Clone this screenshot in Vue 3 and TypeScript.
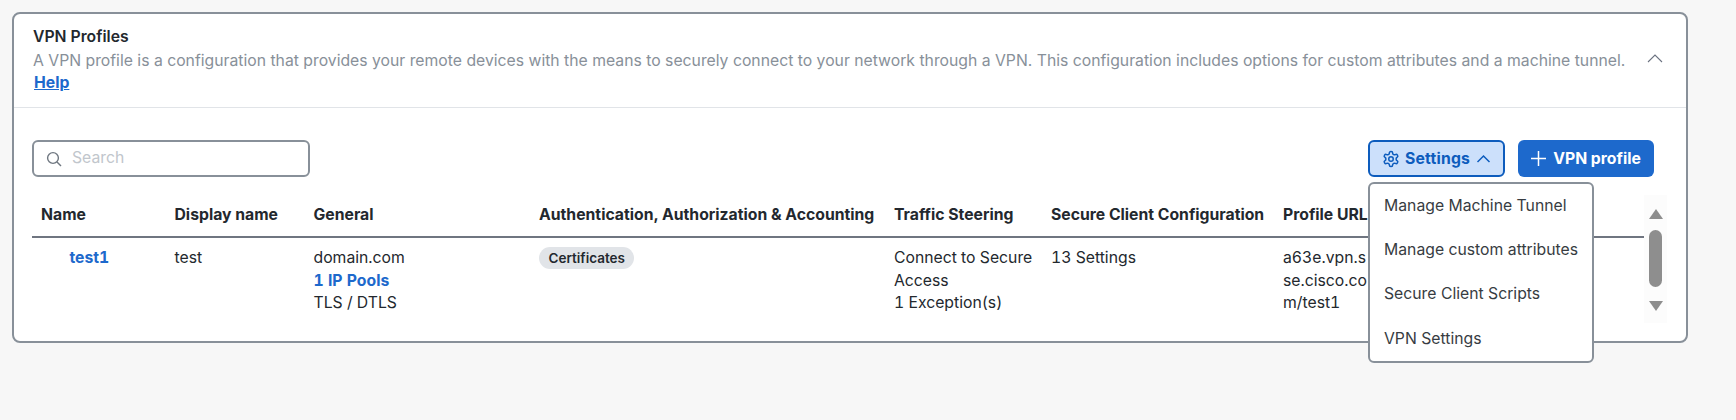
<template>
  <div class="page">
    <section class="card">
      <header class="card-head">
        <div class="head-text">
          <h2 class="title">VPN Profiles</h2>
          <p class="desc">A VPN profile is a configuration that provides your remote devices with the means to securely connect to your network through a VPN. This configuration includes options for custom attributes and a machine tunnel.</p>
          <a class="help" href="#">Help</a>
        </div>
        <svg class="collapse" width="18" height="10" viewBox="0 0 18 10" fill="none">
          <path d="M2 9l7-7 7 7" stroke="#6b7280" stroke-width="1.1" />
        </svg>
      </header>

      <div class="toolbar">
        <label class="search">
          <svg width="16" height="16" viewBox="0 0 16 16" fill="none">
            <circle cx="7" cy="7" r="5.4" stroke="#6f7780" stroke-width="1.4" />
            <path d="M11 11l4 4" stroke="#6f7780" stroke-width="1.4" />
          </svg>
          <input type="text" placeholder="Search" />
        </label>
        <div class="actions">
          <button class="btn btn-settings" type="button">
            <svg width="18" height="18" viewBox="0 0 24 24" fill="none" stroke="#0d5cbd" stroke-width="2">
              <path d="M12.22 2h-.44a2 2 0 0 0-2 2v.18a2 2 0 0 1-1 1.73l-.43.25a2 2 0 0 1-2 0l-.15-.08a2 2 0 0 0-2.73.73l-.22.38a2 2 0 0 0 .73 2.73l.15.1a2 2 0 0 1 1 1.72v.51a2 2 0 0 1-1 1.74l-.15.09a2 2 0 0 0-.73 2.73l.22.38a2 2 0 0 0 2.73.73l.15-.08a2 2 0 0 1 2 0l.43.25a2 2 0 0 1 1 1.73V20a2 2 0 0 0 2 2h.44a2 2 0 0 0 2-2v-.18a2 2 0 0 1 1-1.73l.43-.25a2 2 0 0 1 2 0l.15.08a2 2 0 0 0 2.73-.73l.22-.39a2 2 0 0 0-.73-2.73l-.15-.08a2 2 0 0 1-1-1.74v-.5a2 2 0 0 1 1-1.74l.15-.09a2 2 0 0 0 .73-2.73l-.22-.38a2 2 0 0 0-2.73-.73l-.15.08a2 2 0 0 1-2 0l-.43-.25a2 2 0 0 1-1-1.73V4a2 2 0 0 0-2-2z" />
              <circle cx="12" cy="12" r="3" />
            </svg>
            <span class="settings-label">Settings</span>
            <svg class="settings-chevron" width="15" height="9" viewBox="0 0 15 9" fill="none">
              <path d="M1.5 8l6-6 6 6" stroke="#0d5cbd" stroke-width="1.5" />
            </svg>
          </button>
          <button class="btn btn-primary" type="button">
            <svg width="15" height="15" viewBox="0 0 15 15" fill="none">
              <path d="M7.5 0v15M0 7.5h15" stroke="#fff" stroke-width="1.5" />
            </svg>
            <span>VPN profile</span>
          </button>
          <ul class="menu">
            <li v-for="item in menuItems" :key="item">{{ item }}</li>
          </ul>
        </div>
      </div>

      <div class="table-wrap">
        <div class="table">
          <div class="row row-head">
            <div v-for="col in columns" :key="col">{{ col }}</div>
          </div>
          <div class="row row-body">
            <div><a class="link name-link" href="#">test1</a></div>
            <div>test</div>
            <div>
              domain.com<br />
              <a class="link" href="#">1 IP Pools</a><br />
              TLS / DTLS
            </div>
            <div><span class="badge">Certificates</span></div>
            <div>Connect to Secure Access<br />1 Exception(s)</div>
            <div>13 Settings</div>
            <div class="url">a63e.vpn.sse.cisco.com/test1</div>
          </div>
        </div>
        <div class="scrollbar">
          <span class="arrow arrow-up"></span>
          <span class="thumb"></span>
          <span class="arrow arrow-down"></span>
        </div>
      </div>
    </section>
  </div>
</template>

<script setup lang="ts">
const columns: string[] = [
  'Name',
  'Display name',
  'General',
  'Authentication, Authorization & Accounting',
  'Traffic Steering',
  'Secure Client Configuration',
  'Profile URL'
]

const menuItems: string[] = [
  'Manage Machine Tunnel',
  'Manage custom attributes',
  'Secure Client Scripts',
  'VPN Settings'
]
</script>

<style>
html,
body {
  background: #f7f7f7;
}
</style>

<style scoped>
.page {
  min-height: 420px;
  box-sizing: border-box;
  padding: 12px 0 0 12px;
  font-family: Inter, "Liberation Sans", sans-serif;
  font-size: 15.75px;
  line-height: 22.5px;
  color: #23282e;
}

.card {
  width: 1676px;
  height: 331px;
  box-sizing: border-box;
  background: #fff;
  border: 2px solid #889099;
  border-radius: 8px;
}

.card-head {
  display: flex;
  align-items: flex-start;
  justify-content: space-between;
  height: 94px;
  box-sizing: border-box;
  padding: 12px 22px 0 19px;
  border-bottom: 1px solid #e1e4e8;
}

.title {
  margin: 0 0 1px;
  font-size: 15.75px;
  line-height: 22.5px;
  font-weight: 600;
  color: #23282e;
}

.desc {
  margin: 0;
  color: #889099;
}

.help {
  margin-left: 1px;
  font-weight: 700;
  color: #1d69cc;
  text-decoration: underline;
}

.collapse {
  margin-top: 27px;
}

.toolbar {
  display: flex;
  align-items: center;
  justify-content: space-between;
  margin: 32px 32px 0 18px;
  height: 37px;
}

.search {
  display: flex;
  align-items: center;
  gap: 10px;
  width: 278px;
  height: 37px;
  box-sizing: border-box;
  padding: 0 0 2px 12px;
  border: 2px solid #889099;
  border-radius: 6px;
}

.search svg {
  margin-top: 2px;
}

.search input {
  flex: 1;
  min-width: 0;
  padding: 0;
  border: none;
  outline: none;
  background: transparent;
  font-family: inherit;
  font-size: 15.75px;
}

.search input::placeholder {
  color: #c1c6cc;
}

.actions {
  position: relative;
  display: flex;
  gap: 13px;
}

.btn {
  display: flex;
  align-items: center;
  justify-content: center;
  height: 37px;
  box-sizing: border-box;
  border-radius: 6px;
  font-family: inherit;
  font-size: 15.75px;
  font-weight: 700;
}

.btn-settings {
  width: 137px;
  justify-content: flex-start;
  padding: 0 0 0 12px;
  background: #cce0fb;
  border: 2px solid #0d5cbd;
  color: #0d5cbd;
}

.settings-label {
  margin-left: 5px;
  letter-spacing: 0.2px;
}

.settings-chevron {
  margin-left: 6px;
}

.btn-primary {
  width: 136px;
  gap: 7px;
  padding: 0;
  background: #1d69cc;
  border: none;
  color: #fff;
}

.menu {
  position: absolute;
  z-index: 2;
  top: 42px;
  left: 0;
  width: 226px;
  height: 181px;
  box-sizing: border-box;
  margin: 0;
  padding: 0 0 0 14px;
  list-style: none;
  background: #fff;
  border: 2px solid #889099;
  border-radius: 6px;
  color: #373c42;
}

.menu li {
  height: 44.3px;
  display: flex;
  align-items: center;
}

.table-wrap {
  display: flex;
  margin: 18px 19px 0 18px;
  height: 128px;
}

.table {
  width: 1613px;
  overflow: hidden;
}

.row {
  display: grid;
  grid-template-columns: 133.5px 139px 225.5px 355px 157px 232px 95px;
}

.row > div {
  padding-left: 9px;
  box-sizing: border-box;
}

.row-head {
  height: 41px;
  align-items: center;
  font-weight: 700;
  color: #23282e;
  border-bottom: 2px solid #6f7580;
  white-space: nowrap;
}

.row-body {
  padding-top: 9px;
  font-variant-numeric: tabular-nums;
}

.name-link {
  margin-left: 28.5px;
}

.link {
  font-weight: 700;
  color: #1d69cc;
  text-decoration: none;
}

.badge {
  display: inline-block;
  height: 22px;
  line-height: 22px;
  padding: 0 9.5px;
  border-radius: 11px;
  background: #e1e4e8;
  font-size: 13.5px;
  font-weight: 600;
  vertical-align: top;
}

.url {
  word-break: break-all;
}

.scrollbar {
  width: 23px;
  height: 128px;
  display: flex;
  flex-direction: column;
  align-items: center;
  background: #fcfcfc;
}

.arrow {
  width: 0;
  height: 0;
  border-left: 7px solid transparent;
  border-right: 7px solid transparent;
}

.arrow-up {
  margin-top: 14px;
  border-bottom: 10px solid #8e8e8e;
}

.arrow-down {
  margin-top: 14px;
  border-top: 10px solid #8e8e8e;
}

.thumb {
  width: 13px;
  height: 57px;
  margin-top: 11px;
  border-radius: 7px;
  background: #8e8e8e;
}
</style>
